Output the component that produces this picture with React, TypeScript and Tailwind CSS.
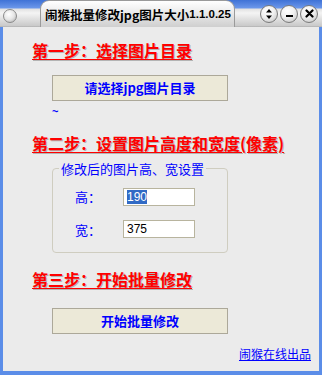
import React from 'react';

const cjk = "font-['SimSun','Noto_Sans_CJK_SC',sans-serif]";

function RoundBtn({ children }: { children: React.ReactNode }) {
  return (
    <div className="flex h-[18px] w-[18px] items-center justify-center rounded-full border border-[#7a7a7a] bg-[radial-gradient(circle_at_40%_30%,#ffffff_0%,#f0f0f0_45%,#bdbdbd_100%)] text-black">
      {children}
    </div>
  );
}

function TitleBar() {
  return (
    <div className="relative flex h-[27px] w-full shrink-0 bg-[linear-gradient(to_bottom,#3f72d6_0px,#6b97ea_8px,#e2e2e2_9px,#f4f4f4_13px,#c9c9c9_26px,#a8a8a8_27px)]">
      {/* left orb */}
      <div className="flex w-[40px] shrink-0 items-center pl-[3px] pt-[4px]">
        <div className="h-[14px] w-[14px] rounded-full border border-[#8a8a8a] bg-[radial-gradient(circle_at_40%_35%,#ffffff_0%,#e6e6e6_50%,#a9a9a9_100%)]" />
      </div>
      {/* title tab */}
      <div className="flex w-[195px] shrink-0 items-center whitespace-nowrap rounded-t-[9px] border-x border-t border-[#9a9a9a] bg-[linear-gradient(to_bottom,#ffffff_0%,#ededed_40%,#cfcfcf_100%)] pl-[4px] pt-[2px]">
        <span className={`${cjk} text-[12.5px] font-bold leading-none text-black`}>闹猴批量修改jpg图片大小</span>
        <span className="font-['Liberation_Sans',sans-serif] text-[11.5px] font-bold leading-none text-black">1.1.0.25</span>
      </div>
      {/* controls */}
      <div className="flex flex-1 items-center justify-end gap-[2px] pr-[4px]">
        <RoundBtn>
          <svg width="8" height="10" viewBox="0 0 8 10">
            <path d="M4 0 L7 3.5 H1 Z M4 10 L7 6.5 H1 Z" fill="#000" />
          </svg>
        </RoundBtn>
        <RoundBtn>
          <div className="mt-[5px] h-[2px] w-[7px] bg-black" />
        </RoundBtn>
        <RoundBtn>
          <svg width="9" height="9" viewBox="0 0 9 9">
            <path d="M1.5 1.5 L7.5 7.5 M7.5 1.5 L1.5 7.5" stroke="#000" strokeWidth="2.2" strokeLinecap="round" />
          </svg>
        </RoundBtn>
      </div>
    </div>
  );
}

function StepTitle({ children }: { children: React.ReactNode }) {
  return (
    <div
      className={`${cjk} h-[20px] text-[16px] font-bold leading-[20px] whitespace-nowrap text-[#ff0000] underline underline-offset-[2px] [text-shadow:1px_1px_0_#b4b4b4]`}
    >
      {children}
    </div>
  );
}

function XpButton({ children }: { children: React.ReactNode }) {
  return (
    <button
      type="button"
      className={`${cjk} flex h-[26px] w-[176px] items-center justify-center border border-[#aca899] bg-[#ece9d8] text-[13px] font-bold text-[#0000ff]`}
    >
      {children}
    </button>
  );
}

export default function App() {
  return (
    <div className="flex h-[375px] w-[322px] flex-col overflow-hidden bg-[#ebebeb]">
      <TitleBar />
      <div className="flex flex-1 flex-col border-x-[3px] border-b-[4px] border-[#5b8de8] bg-[#ebebeb] pl-[29px]">
        <div className="mt-[13px]">
          <StepTitle>第一步：选择图片目录</StepTitle>
        </div>
        <div className="mt-[15px] ml-[20px]">
          <XpButton>请选择jpg图片目录</XpButton>
        </div>
        <div className="ml-[20px] mt-[5px] h-[7px] font-['Liberation_Sans',sans-serif] text-[11px] font-bold leading-[10px] text-[#0000ff]">~</div>

        <div className="mt-[20px]">
          <StepTitle>第二步：设置图片高度和宽度(像素)</StepTitle>
        </div>

        <fieldset className="mt-[8px] ml-[20px] h-[92px] w-[176px] rounded-[4px] border border-[#cfcdc0] px-[6px]">
          <legend className={`${cjk} px-[2px] text-[13px] leading-[15px] text-[#0000ff]`}>修改后的图片高、宽设置</legend>
          <div className="mt-[11px] flex items-center">
            <span className={`${cjk} w-[64px] pl-[16px] text-[13px] text-[#0000ff]`}>高：</span>
            <div className="flex h-[18px] w-[72px] items-center border border-[#b8b49e] bg-white pl-[3px]">
              <span className="bg-[#316ac5] font-['Liberation_Sans',sans-serif] text-[12px] leading-[14px] text-white">190</span>
            </div>
          </div>
          <div className="mt-[13px] flex items-center">
            <span className={`${cjk} w-[64px] pl-[16px] text-[13px] text-[#0000ff]`}>宽：</span>
            <div className="flex h-[18px] w-[72px] items-center border border-[#b8b49e] bg-white pl-[3px]">
              <span className="font-['Liberation_Sans',sans-serif] text-[12px] leading-[14px] text-black">375</span>
            </div>
          </div>
        </fieldset>

        <div className="mt-[16px]">
          <StepTitle>第三步：开始批量修改</StepTitle>
        </div>
        <div className="mt-[19px] ml-[20px]">
          <XpButton>开始批量修改</XpButton>
        </div>
        <div className="mt-[12px] flex justify-end pr-[8px]">
          <a href="#" className={`${cjk} text-[12px] leading-[15px] text-[#0000ff] underline`}>
            闹猴在线出品
          </a>
        </div>
      </div>
    </div>
  );
}
